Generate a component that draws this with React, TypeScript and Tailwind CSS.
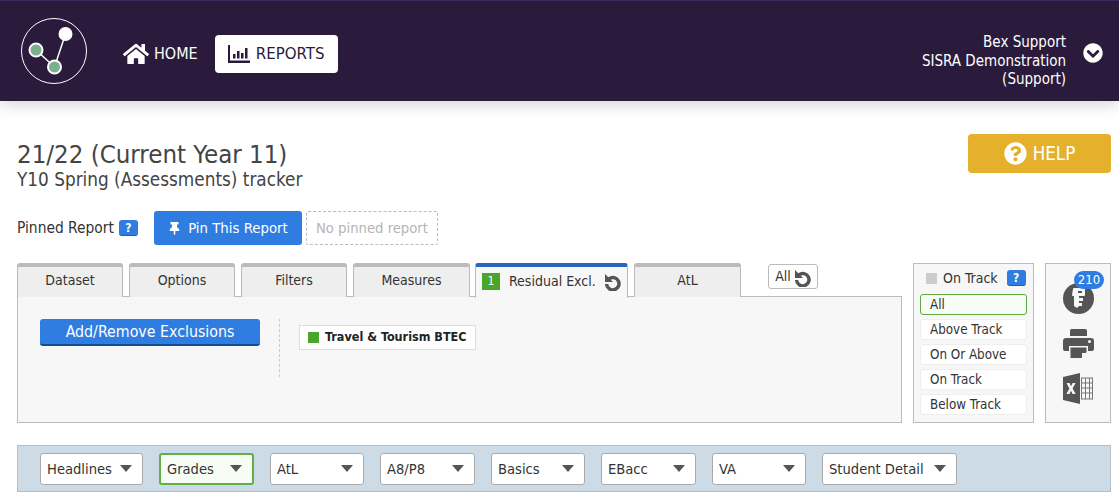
import { FaHome, FaThumbtack, FaQuestionCircle, FaChevronCircleDown } from "react-icons/fa";

const tabs = [
  { label: "Dataset", width: "w-[106px]" },
  { label: "Options", width: "w-[106px]" },
  { label: "Filters", width: "w-[106px]" },
  { label: "Measures", width: "w-[117px]" },
];

const trackOptions = ["Above Track", "On Or Above", "On Track", "Below Track"];

const menus = [
  { label: "Headlines", width: "w-[103px]" },
  { label: "Grades", width: "w-[95px]", active: true },
  { label: "AtL", width: "w-[94px]" },
  { label: "A8/P8", width: "w-[95px]" },
  { label: "Basics", width: "w-[94px]" },
  { label: "EBacc", width: "w-[95px]" },
  { label: "VA", width: "w-[94px]" },
  { label: "Student Detail", width: "w-[135px]" },
];

function Logo() {
  return (
    <svg width="68" height="68" viewBox="0 0 68 68" fill="none">
      <circle cx="34" cy="34" r="32.5" stroke="#fff" strokeWidth="1" />
      <path d="M16 33 L34.5 50 L45.5 17" stroke="#fff" strokeWidth="1.5" />
      <circle cx="16" cy="33" r="6.5" fill="#7bb08f" stroke="#fff" strokeWidth="2" />
      <circle cx="34.5" cy="50" r="6.5" fill="#7bb08f" stroke="#fff" strokeWidth="2" />
      <circle cx="45.5" cy="17" r="7" fill="#fff" />
    </svg>
  );
}

function ReportsIcon() {
  return (
    <svg width="22" height="18" viewBox="0 0 22 18" fill="#2a1b3d">
      <path d="M0 0h2v15.5h20V18H0z" />
      <rect x="5" y="9" width="2.5" height="4.5" />
      <rect x="9" y="6" width="2.5" height="7.5" />
      <rect x="13" y="8" width="2.5" height="5.5" />
      <rect x="17" y="3" width="2.5" height="10.5" />
    </svg>
  );
}

function ResetIcon() {
  return (
    <svg width="17" height="18" viewBox="0 0 17 18" fill="none">
      <path d="M5 5.800A6.200 6.200 0 1 1 2.600 11" stroke="#555" strokeWidth="3.500" />
      <path d="M1 1v8h8z" fill="#555" />
    </svg>
  );
}

function KeyIcon() {
  return (
    <svg width="31" height="31" viewBox="0 0 31 31">
      <circle cx="15.500" cy="15.500" r="15.500" fill="#555" />
      <path
        d="M10 6a1 1 0 0 1 1-1h10a1 1 0 0 1 1 1v6a1 1 0 0 1-1 1h-5v2h4v3h-4v2h3v3h-3l-2 2-3-2V13h-1a1 1 0 0 1-1-1zM15 8v2h4V8z"
        fill="#f7f7f7"
        fillRule="evenodd"
      />
    </svg>
  );
}

function PrintIcon() {
  return (
    <svg width="31" height="29" viewBox="0 0 31 29" fill="#555">
      <path d="M7 7V1.500A1.500 1.500 0 0 1 8.500 0h14A1.500 1.500 0 0 1 24 1.500V7z" />
      <path d="M3 9h25a3 3 0 0 1 3 3v8a2 2 0 0 1-2 2h-4v-5H6v5H2a2 2 0 0 1-2-2v-8a3 3 0 0 1 3-3z" />
      <path d="M7.500 18.500h16V23l-5 6H7.500z" />
      <path d="M19 24h4.500L19 28.500z" fill="#f7f7f7" />
      <circle cx="26.500" cy="12.500" r="1.500" fill="#f7f7f7" />
    </svg>
  );
}

function ExcelIcon() {
  return (
    <svg width="30" height="31" viewBox="0 0 30 31">
      <path d="M0 4 17 0v31L0 27z" fill="#555" />
      <path
        d="M18 4.500h12v22H18z M19 5.500v4h3v-4z M23 5.500v4h3v-4z M27 5.500v4h2v-4z M19 10.500v4h3v-4z M23 10.500v4h3v-4z M27 10.500v4h2v-4z M19 15.500v4h3v-4z M23 15.500v4h3v-4z M27 15.500v4h2v-4z M19 20.500v5h3v-5z M23 20.500v5h3v-5z M27 20.500v5h2v-5z"
        fill="#777"
        fillRule="evenodd"
      />
      <path d="M3.500 10h3l1.500 3.300L9.600 10h3l-3 5.500 3 5.500h-3L8 17.700 6.400 21h-3l3-5.500z" fill="#f7f7f7" />
    </svg>
  );
}

function Caret() {
  return (
    <svg width="12" height="7" viewBox="0 0 12 7" fill="#555">
      <path d="M0 0h12L6 7z" />
    </svg>
  );
}

function HelpBadge() {
  return (
    <span className="flex h-[16px] w-[19px] items-center justify-center rounded-[3px] border-b border-[#1f5fa8] bg-[#2f7de1] text-[12px] font-bold text-white">
      ?
    </span>
  );
}

export default function App() {
  return (
    <div className="h-[498px] w-[1119px] overflow-hidden bg-white font-['DejaVu_Sans_Condensed','DejaVu_Sans',sans-serif] text-[#333]">
      {/* top bar */}
      <header className="flex h-[101px] items-center justify-between border-t border-[#3a2a5a] bg-[#2a1b3d] pl-[20px] pr-[16px] shadow-[0_4px_14px_rgba(0,0,0,0.16)]">
        <div className="flex items-center">
          <Logo />
          <a className="ml-[35px] mt-[5px] flex items-center gap-[5px] text-[16px] text-white">
            <FaHome size={26} color="#fff" />
            HOME
          </a>
          <a className="ml-[17px] mt-[5px] flex h-[38px] w-[123px] items-center justify-center gap-[6px] rounded-[4px] bg-white text-[16.700px] text-[#2a1b3d]">
            <ReportsIcon />
            REPORTS
          </a>
        </div>
        <div className="flex items-center gap-[17px]">
          <div className="mt-[20px] text-right text-[15px] leading-[18.500px] text-white">
            <div>Bex Support</div>
            <div>SISRA Demonstration</div>
            <div>(Support)</div>
          </div>
          <div className="mt-[4px]">
            <FaChevronCircleDown size={20} color="#fff" />
          </div>
        </div>
      </header>

      <main className="pl-[17px] pr-[8px]">
        <div className="flex items-start justify-between pt-[33px]">
          <div className="pt-[6px]">
            <h1 className="text-[25.600px] leading-[29px] text-[#444]">21/22 (Current Year 11)</h1>
            <p className="text-[18.800px] leading-[22px] text-[#444]">Y10 Spring (Assessments) tracker</p>
          </div>
          <button className="flex h-[39px] w-[143px] items-center justify-center gap-[6px] rounded-[4px] bg-[#e5b02b] text-[18.600px] text-white">
            <FaQuestionCircle size={23} color="#fff" />
            HELP
          </button>
        </div>

        <div className="mt-[20px] flex items-center">
          <span className="text-[15.400px] leading-[30px]">Pinned Report</span>
          <span className="ml-[5px]">
            <HelpBadge />
          </span>
          <button className="ml-[16px] flex h-[34px] w-[148px] items-center justify-center gap-[7px] rounded-[3px] bg-[#2f7de1] text-[14.800px] text-white">
            <FaThumbtack size={13} color="#fff" />
            Pin This Report
          </button>
          <div className="ml-[4px] flex h-[34px] w-[132px] items-center justify-center rounded-[2px] border border-dashed border-[#bbb] text-[14.700px] text-[#b5b5b5]">
            No pinned report
          </div>
        </div>

        <div className="mt-[18px] flex gap-[11px]">
          <div className="w-[885px]">
            <div className="relative z-10 flex h-[34px] gap-[6px]">
              {tabs.map((tab) => (
                <div
                  key={tab.label}
                  className={`${tab.width} flex h-[34px] items-center justify-center rounded-t-[3px] border-x border-t-[4px] border-[#bbb] bg-[#eee] pb-[4px] text-[14px]`}
                >
                  {tab.label}
                </div>
              ))}
              <div className="-ml-px flex h-[35px] w-[153px] items-center rounded-t-[3px] border-x border-t-[4px] border-x-[#bbb] border-t-[#2a66bd] bg-[#f7f7f7] pb-[3px] pl-[6px] text-[14px]">
                <span className="flex h-[17px] w-[18px] items-center justify-center bg-[#4aa52a] text-[12px] text-white">1</span>
                <span className="ml-[9px]">Residual Excl.</span>
                <span className="ml-[8px] mt-[1px]">
                  <ResetIcon />
                </span>
              </div>
              <div className="flex h-[34px] w-[107px] items-center justify-center rounded-t-[3px] border-x border-t-[4px] border-[#bbb] bg-[#eee] pb-[4px] text-[14px]">
                AtL
              </div>
              <div className="ml-[21px] mt-px flex h-[25px] w-[50px] items-center justify-center gap-[3px] rounded-[3px] border border-[#bbb] bg-white text-[14px]">
                All
                <span className="mt-[2px]">
                  <ResetIcon />
                </span>
              </div>
            </div>
            <div className="-mt-px flex h-[127px] border border-[#bbb] bg-[#f7f7f7] pl-[22px] pt-[22px]">
              <button className="h-[27px] w-[220px] rounded-[3px] border-b-[2px] border-[#134f8f] bg-[#2f7de1] text-[15.800px] text-white">
                Add/Remove Exclusions
              </button>
              <div className="ml-[19px] h-[58px] border-l border-dashed border-[#ccc]" />
              <div className="ml-[19px] mt-[6px] flex h-[25px] w-[177px] items-center gap-[6px] border border-[#ddd] bg-white pl-[8px] text-[12.500px] font-bold text-[#222]">
                <span className="h-[11px] w-[11px] bg-[#4aa52a]" />
                Travel &amp; Tourism BTEC
              </div>
            </div>
          </div>

          <div className="h-[160px] w-[121px] border border-[#bbb] bg-[#f7f7f7] px-[6px]">
            <div className="flex h-[28px] items-center whitespace-nowrap pl-[6px] text-[14px]">
              <span className="h-[11px] w-[11px] bg-[#ccc]" />
              <span className="ml-[6px]">On Track</span>
              <span className="ml-[9px]">
                <HelpBadge />
              </span>
            </div>
            <div className="mt-[2px] flex h-[21px] items-center rounded-[3px] border border-[#5fa83f] bg-[#f7fdf5] pl-[9px] text-[13.300px]">All</div>
            {trackOptions.map((option) => (
              <div
                key={option}
                className="mt-[4px] flex h-[21px] items-center rounded-[3px] border border-[#eee] bg-white pl-[9px] text-[13.300px]"
              >
                {option}
              </div>
            ))}
          </div>

          <div className="relative flex h-[160px] w-[66px] flex-col items-center gap-[15px] border border-[#bbb] bg-[#f7f7f7] pt-[19px]">
            <span className="absolute left-[28px] top-[7px] flex h-[18px] w-[30px] items-center justify-center rounded-full bg-[#2f7de1] text-[13px] text-white">210</span>
            <KeyIcon />
            <PrintIcon />
            <ExcelIcon />
          </div>
        </div>

        <nav className="mt-[22px] flex h-[47px] w-[1094px] items-center gap-[16px] border border-[#b5bdc6] bg-[#cddbe6] pl-[22px]">
          {menus.map((menu) => (
            <div
              key={menu.label}
              className={`${menu.width} flex h-[32px] items-center justify-between rounded-[3px] pl-[6px] pr-[10px] text-[14.600px] ${
                menu.active ? "border-[2px] border-[#62ae47] bg-[#f7fdf5]" : "border border-[#aaa] bg-white"
              }`}
            >
              <span className="mt-[1px]">{menu.label}</span>
              <Caret />
            </div>
          ))}
        </nav>
      </main>
    </div>
  );
}
